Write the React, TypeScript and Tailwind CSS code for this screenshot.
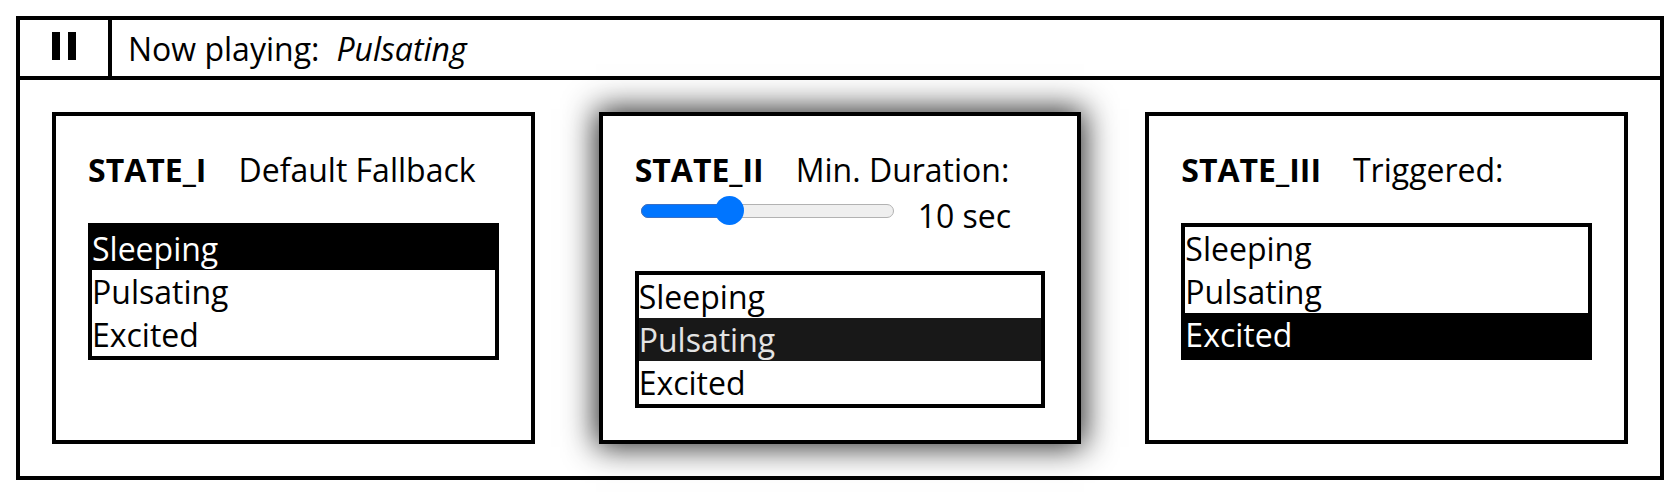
import React from 'react';

const options = ['Sleeping', 'Pulsating', 'Excited'];

const StateList = ({ selected, dim }: { selected: string; dim?: boolean }) => (
  <div className="mt-8 border-4 border-black bg-white">
    {options.map((opt) => {
      const active = opt === selected;
      return (
        <div
          key={opt}
          className={
            active
              ? dim
                ? 'bg-[#181818] text-[#e3e3e3]'
                : 'bg-black text-white'
              : 'text-black'
          }
        >
          {opt}
        </div>
      );
    })}
  </div>
);

const PauseIcon = () => (
  <svg width="24" height="28" viewBox="0 0 24 28" fill="black">
    <rect x="0" y="0" width="8" height="28" />
    <rect x="16" y="0" width="8" height="28" />
  </svg>
);

export default function App() {
  return (
    <div className="p-4 bg-white text-black font-['Open_Sans',sans-serif] text-[32px] leading-[normal]">
      <div className="border-4 border-black">
        {/* Now playing bar */}
        <div className="flex h-[60px] border-b-4 border-black">
          <div className="w-[92px] border-r-4 border-black flex items-center justify-center pb-1">
            <PauseIcon />
          </div>
          <div className="flex items-center pl-4">
            <span>Now playing:</span>
            <span className="ml-[17px] italic">Pulsating</span>
          </div>
        </div>

        {/* States */}
        <div className="flex gap-16 p-8">
          <div className="flex-1 border-4 border-black p-8">
            <div className="flex">
              <span className="font-bold">STATE_I</span>
              <span className="ml-8">Default Fallback</span>
            </div>
            <StateList selected="Sleeping" />
          </div>

          <div className="flex-1 border-4 border-black p-8 shadow-[0_0_30px_3px_rgba(0,0,0,0.85)]">
            <div className="flex">
              <span className="font-bold">STATE_II</span>
              <span className="ml-8">Min. Duration:</span>
            </div>
            <div className="flex h-[48px]">
              <div className="relative ml-[6px] mt-[5px] w-[253px] h-[30px]">
                <div className="absolute left-0 right-0 top-[8px] h-[14px] rounded-full bg-[#efefef] border border-[#b2b2b2]" />
                <div className="absolute left-0 w-[89px] top-[8px] h-[14px] rounded-l-full bg-[#0075ff] border border-[#3a6fc4]" />
                <div className="absolute left-[74px] top-0 w-[29px] h-[29px] rounded-full bg-[#0075ff]" />
              </div>
              <span className="ml-[24px] self-center">10 sec</span>
            </div>
            <StateList selected="Pulsating" dim />
          </div>

          <div className="flex-1 border-4 border-black p-8">
            <div className="flex">
              <span className="font-bold">STATE_III</span>
              <span className="ml-8">Triggered:</span>
            </div>
            <StateList selected="Excited" />
          </div>
        </div>
      </div>
    </div>
  );
}
